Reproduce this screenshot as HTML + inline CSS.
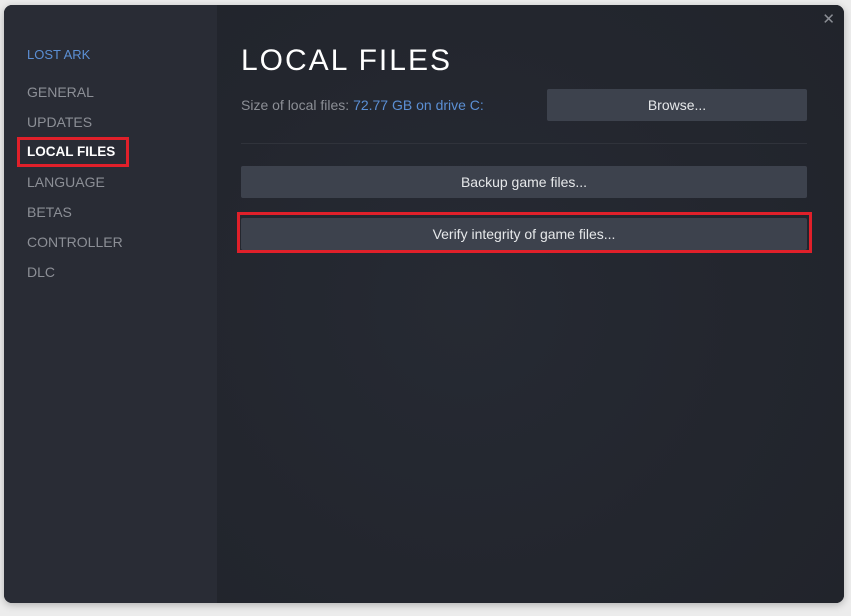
<!DOCTYPE html>
<html><head><style>
body{margin:0;width:851px;height:616px;background:#ececec;position:relative;overflow:hidden;font-family:"Liberation Sans",sans-serif}
.win{position:absolute;left:4px;top:5px;width:840px;height:598px;border-radius:8px;overflow:hidden;background:#23262e;box-shadow:0 2px 8px rgba(0,0,0,.25)}
.side{position:absolute;left:0;top:0;width:213px;height:100%;background:#292c35}
.main{position:absolute;left:213px;top:0;right:0;bottom:0;background:radial-gradient(circle at 250px 300px,#262a33 0,#23262e 60%,#21242b 100%)}
.nav{position:absolute;left:23px;font-size:14px;color:#8c8f96;letter-spacing:0}
.close{position:absolute;right:9px;top:5px;color:#8b8e95;font-size:15px}
h1{position:absolute;left:237px;top:39px;margin:0;font-weight:normal;color:#fff;font-size:30px;letter-spacing:2px}
.btn{position:absolute;background:#3d424d;color:#e6e8ea;font-size:14px;text-align:center;border-radius:2px}
.red{position:absolute;border:3px solid #e0202a}
</style></head><body>
<div class="win">
<div class="side"></div>
<div class="main"></div>
<div class="nav" style="top:42px;color:#5b8fd4;font-size:13px">LOST ARK</div>
<div class="nav" style="top:79px">GENERAL</div>
<div class="nav" style="top:109px">UPDATES</div>
<div class="nav" style="top:139px;color:#fff;font-weight:bold;font-size:13.5px">LOCAL FILES</div>
<div class="red" style="left:13px;top:132px;width:106px;height:24px"></div>
<div class="nav" style="top:169px">LANGUAGE</div>
<div class="nav" style="top:199px">BETAS</div>
<div class="nav" style="top:229px">CONTROLLER</div>
<div class="nav" style="top:259px">DLC</div>
<div class="close">✕</div>
<h1>LOCAL FILES</h1>
<div style="position:absolute;left:237px;top:92px;font-size:14px;color:#8c8f96">Size of local files: <span style="color:#5b8fd4">72.77 GB on drive C:</span></div>
<div class="btn" style="left:543px;top:84px;width:260px;height:32px;line-height:32px">Browse...</div>
<div style="position:absolute;left:237px;top:138px;width:566px;height:1px;background:#30333b"></div>
<div class="btn" style="left:237px;top:161px;width:566px;height:32px;line-height:32px">Backup game files...</div>
<div class="btn" style="left:237px;top:213px;width:566px;height:32px;line-height:32px">Verify integrity of game files...</div>
<div class="red" style="left:233px;top:207px;width:569px;height:35px"></div>
</div>
</body></html>
